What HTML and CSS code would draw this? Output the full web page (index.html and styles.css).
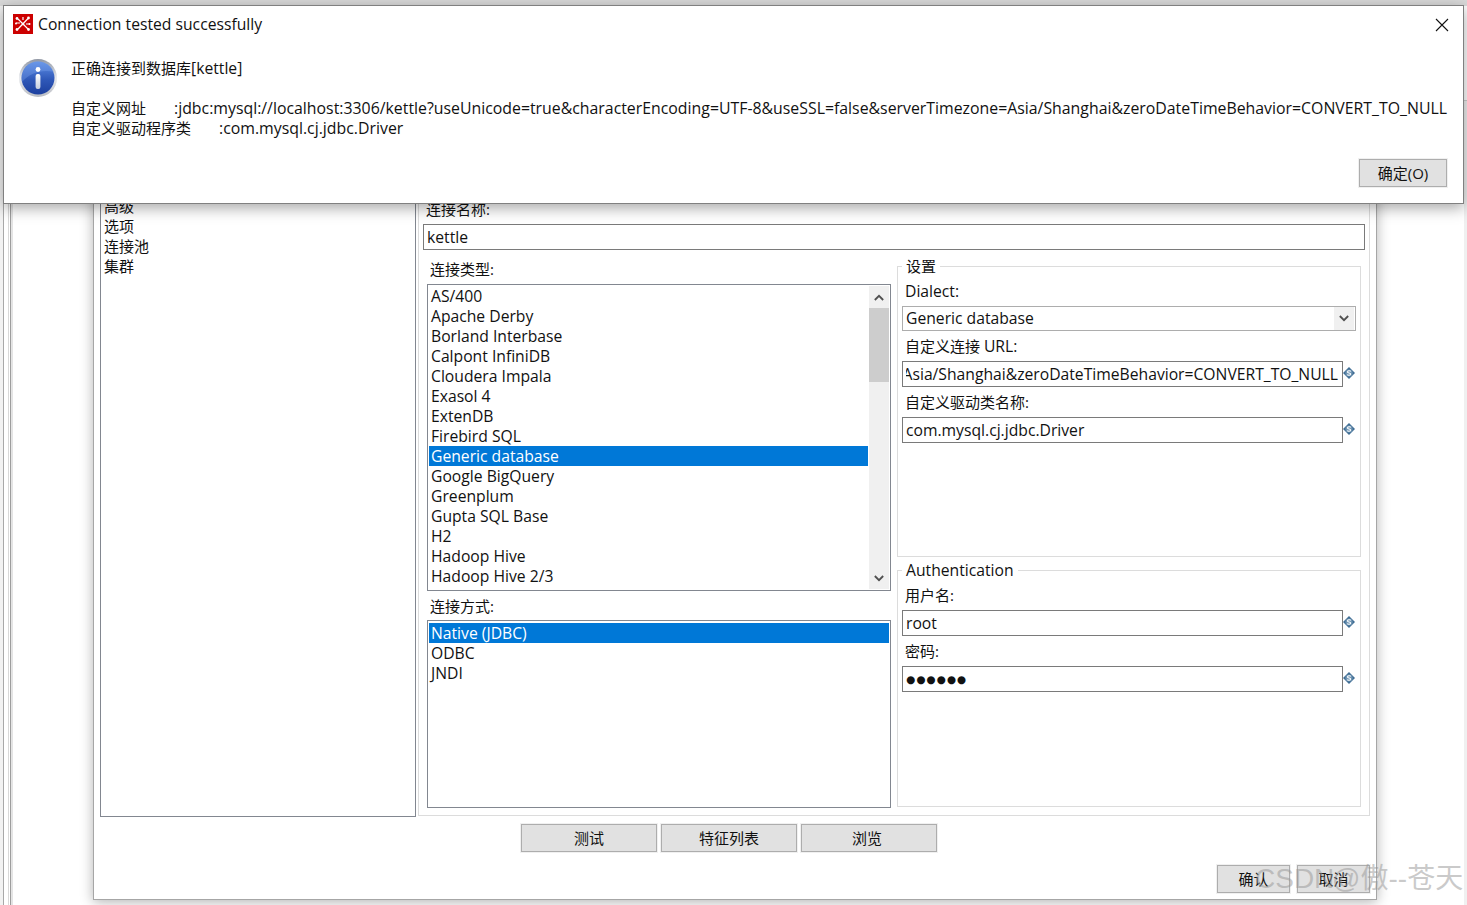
FILE: index.html
```html
<!DOCTYPE html>
<html lang="zh-CN">
<head>
<meta charset="utf-8">
<title>Connection tested successfully</title>
<link rel="stylesheet" href="styles.css">
</head>
<body>
<svg class="defs" width="0" height="0" aria-hidden="true">
  <defs>
    <symbol id="var" viewBox="0 0 12 12">
      <path d="M6 0 L12 6 L6 12 L0 6 Z" fill="#3f6d94"/>
      <circle cx="6" cy="6" r="3.6" fill="#6f94b2"/>
      <path d="M7.8 4.3 C7 3.5 4.5 3.5 4.5 5 C4.5 6.5 7.6 5.5 7.6 7 C7.6 8.5 5 8.5 4.2 7.7" fill="none" stroke="#fff" stroke-width="1.1"/>
    </symbol>
    <symbol id="up" viewBox="0 0 12 8"><path d="M1 7 L6 2 L11 7" fill="none" stroke="#505050" stroke-width="2.2"/></symbol>
    <symbol id="down" viewBox="0 0 12 8"><path d="M1 1 L6 6 L11 1" fill="none" stroke="#505050" stroke-width="2.2"/></symbol>
  </defs>
</svg>

<div class="desk">
  <div class="rail rail-left"></div>
  <div class="rail rail-right"></div>
  <div class="top-strip"></div>

  <main class="win">
    <div class="win-main">
      <ul class="tree">
        <li>一般</li><li>高级</li><li>选项</li><li>连接池</li><li>集群</li>
      </ul>
      <section class="panel">
        <div class="name-label">连接名称:</div>
        <div class="field name-field">kettle</div>
        <div class="cols">
          <div class="col-left">
            <div class="col-label">连接类型:</div>
            <div class="list list-type">
              <ul class="items">
                <li>AS/400</li><li>Apache Derby</li><li>Borland Interbase</li><li>Calpont InfiniDB</li><li>Cloudera Impala</li><li>Exasol 4</li><li>ExtenDB</li><li>Firebird SQL</li><li class="sel">Generic database</li><li>Google BigQuery</li><li>Greenplum</li><li>Gupta SQL Base</li><li>H2</li><li>Hadoop Hive</li><li>Hadoop Hive 2/3</li>
              </ul>
              <div class="sbar">
                <div class="sarrow"><svg width="10" height="7"><use href="#up"/></svg></div>
                <div class="thumb"></div>
                <div class="strack"></div>
                <div class="sarrow"><svg width="10" height="7"><use href="#down"/></svg></div>
              </div>
            </div>
            <div class="col-label col-label-2">连接方式:</div>
            <ul class="list list-method">
              <li class="sel">Native (JDBC)</li><li>ODBC</li><li>JNDI</li>
            </ul>
          </div>
          <div class="col-right">
            <fieldset class="group group-settings">
              <legend>设置</legend>
              <div class="lab lat">Dialect:</div>
              <div class="select"><span class="select-text">Generic database</span><span class="select-btn"><svg width="10" height="7"><use href="#down"/></svg></span></div>
              <div class="lab">自定义连接 <span class="lat">URL:</span></div>
              <div class="row">
                <div class="field field-url"><div class="clip"><span>jdbc:mysql://localhost:3306/kettle?useUnicode=true&amp;characterEncoding=UTF-8&amp;useSSL=false&amp;serverTimezone=Asia/Shanghai&amp;zeroDateTimeBehavior=CONVERT_TO_NULL</span></div></div>
                <svg class="var" width="12" height="12"><use href="#var"/></svg>
              </div>
              <div class="lab">自定义驱动类名称:</div>
              <div class="row">
                <div class="field">com.mysql.cj.jdbc.Driver</div>
                <svg class="var" width="12" height="12"><use href="#var"/></svg>
              </div>
            </fieldset>
            <fieldset class="group group-auth">
              <legend class="lat">Authentication</legend>
              <div class="lab">用户名:</div>
              <div class="row">
                <div class="field">root</div>
                <svg class="var" width="12" height="12"><use href="#var"/></svg>
              </div>
              <div class="lab">密码:</div>
              <div class="row">
                <div class="field field-pass">●●●●●●</div>
                <svg class="var" width="12" height="12"><use href="#var"/></svg>
              </div>
            </fieldset>
          </div>
        </div>
      </section>
    </div>
    <div class="actions">
      <button class="btn btn-wide">测试</button>
      <button class="btn btn-wide">特征列表</button>
      <button class="btn btn-wide btn-browse">浏览</button>
    </div>
    <div class="confirm">
      <button class="btn btn-small">确认</button>
      <button class="btn btn-small">取消</button>
    </div>
  </main>

  <section class="dialog">
    <header class="dlg-title">
      <svg class="app-icon" width="20" height="20" viewBox="0 0 20 20">
        <rect width="20" height="20" fill="#cc0000"/>
        <g stroke="#fff" stroke-width="1.2" fill="none">
          <path d="M5 5 L15 15 M15 4.5 L5 15 M3 9 H7 M13 10 H17 M10 3 V6"/>
        </g>
        <g fill="#fff">
          <circle cx="4" cy="4.5" r="1.4"/><circle cx="15.5" cy="4" r="1.4"/><circle cx="4" cy="15.5" r="1.4"/><circle cx="15.5" cy="15.5" r="1.4"/><circle cx="10" cy="10" r="1.3"/><circle cx="16.5" cy="10" r="1"/><circle cx="3" cy="9.5" r="1"/>
        </g>
      </svg>
      <span class="dlg-caption lat">Connection tested successfully</span>
      <svg class="close" width="14" height="14" viewBox="0 0 14 14"><path d="M1 1 L13 13 M13 1 L1 13" stroke="#111" stroke-width="1.1" fill="none"/></svg>
    </header>
    <div class="dlg-body">
      <svg class="info" width="40" height="40" viewBox="0 0 40 40">
        <defs>
          <linearGradient id="ring" x1="0" y1="0" x2="0" y2="1"><stop offset="0" stop-color="#8f96a3"/><stop offset="0.5" stop-color="#e8eaee"/><stop offset="1" stop-color="#b9bcc2"/></linearGradient>
          <linearGradient id="ball" x1="0" y1="0" x2="0" y2="1"><stop offset="0" stop-color="#5f8fe6"/><stop offset="0.55" stop-color="#2f58b8"/><stop offset="1" stop-color="#1c3f9e"/></linearGradient>
          <linearGradient id="bar" x1="0" y1="0" x2="0" y2="1"><stop offset="0" stop-color="#fff"/><stop offset="1" stop-color="#c6cfdf"/></linearGradient>
        </defs>
        <circle cx="20" cy="20" r="19" fill="url(#ring)"/>
        <circle cx="20" cy="20" r="16.5" fill="url(#ball)"/>
        <path d="M4 24 C12 14 26 11 36 14 C33 7 27 3.5 20 3.5 C11 3.5 4 11 3.5 20 Z" fill="#7fa6ee" opacity=".35"/>
        <circle cx="20" cy="11.5" r="2.4" fill="#fff"/>
        <rect x="17.6" y="16" width="4.8" height="15" rx="2" fill="url(#bar)"/>
      </svg>
      <div class="dlg-text">
        <div class="dlg-msg">正确连接到数据库<span class="lat">[kettle]</span></div>
        <div class="dlg-line"><span class="k1">自定义网址</span><span class="dlg-url">:jdbc:mysql://localhost:3306/kettle?useUnicode=true&amp;characterEncoding=UTF-8&amp;useSSL=false&amp;serverTimezone=Asia/Shanghai&amp;zeroDateTimeBehavior=CONVERT_TO_NULL</span></div>
        <div class="dlg-line"><span class="k2">自定义驱动程序类</span><span class="dlg-url">:com.mysql.cj.jdbc.Driver</span></div>
      </div>
    </div>
    <footer class="dlg-foot"><button class="btn btn-ok">确定(O)</button></footer>
  </section>

  <div class="watermark">CSDN @傲--苍天</div>
</div>
</body>
</html>
```

FILE: styles.css
```css
* { box-sizing: border-box; }
html, body { margin: 0; padding: 0; }
body {
  width: 1467px;
  height: 905px;
  overflow: hidden;
  background: #fff;
  color: #111;
  font-family: "Open Sans", "Noto Sans CJK SC", sans-serif;
  font-size: 15px;
  line-height: 20px;
}
ul { list-style: none; margin: 0; padding: 0; }
.defs { position: absolute; }
.lat { font-size: 15.7px; }

.desk { position: relative; width: 1467px; height: 905px; overflow: hidden; }

/* the windows behind the dialogs */
.top-strip { position: absolute; left: 0; top: 0; width: 1467px; height: 6px; background: #d9d9d9; }
.rail-left {
  position: absolute; left: 0; top: 0; width: 13px; height: 905px;
  background: linear-gradient(90deg, #f2f2f2 0 3px, #a8a8a8 3px 4px, #fff 4px 8px, #d8d8d8 8px 9px, #fff 9px 10px, #9d9d9d 10px 11px, #e4e4e4 11px 13px);
}
.rail-right {
  position: absolute; right: 0; top: 100px; width: 3px; height: 805px;
  background: #f0f0f0; border-top: 1px solid #cfcfcf;
}

/* connection window */
.win {
  position: absolute; left: 93px; top: 170px; width: 1284px; height: 730px;
  background: #fff;
  border: 1px solid #a6a6a6;
  box-shadow: 0 2px 12px rgba(0, 0, 0, .3);
  padding: 5px 6px 0 6px;
}
.win-main { display: flex; gap: 2px; height: 641px; align-items: flex-start; }
.tree {
  width: 316px; height: 641px; flex: none;
  border: 1px solid #828790;
  padding: 0 3px;
}
.tree li { height: 20px; line-height: 18px; }
.panel {
  width: 952px; height: 640px; flex: none;
  border: 1px solid #dcdcdc;
  padding: 23px 4px 0;
}
.name-label { margin-left: 3px; margin-bottom: 4px; height: 20px; line-height: 18px; }
.field {
  height: 26px; flex: 1; min-width: 0;
  border: 1px solid #7a7a7a;
  padding: 0 3px;
  font-size: 15.7px;
  line-height: 24px;
  background: #fff;
  white-space: nowrap;
  overflow: hidden;
}
.name-field { width: 942px; }
.cols { display: flex; gap: 6px; margin: 7px 0 0 4px; }
.col-left { width: 464px; padding-top: 3px; }
.col-right { width: 464px; display: flex; flex-direction: column; gap: 4px; }
.col-label { margin-left: 3px; height: 20px; line-height: 18px; margin-bottom: 4px; }
.col-label-2 { margin-top: 6px; margin-bottom: 3px; }
.list { border: 1px solid #828790; background: #fff; }
.list-type { height: 307px; padding: 1px; display: flex; overflow: hidden; }
.items { width: 440px; flex: none; padding-right: 1px; }
.list li, .items li { height: 20px; line-height: 20px; font-size: 15.7px; padding-left: 2px; white-space: nowrap; }
.sel { background: #0078d7; color: #fff; }
.list-method { height: 188px; padding: 2px 1px; }
.sbar { width: 20px; flex: none; background: #f0f0f0; display: flex; flex-direction: column; }
.sarrow { height: 22px; flex: none; display: flex; align-items: center; justify-content: center; }
.thumb { height: 74px; flex: none; background: #cdcdcd; }
.strack { flex: 1; }

.group {
  margin: 0; min-width: 0;
  border: 1px solid #dcdcdc;
  padding: 6px 4px 0;
}
.group legend { padding: 0 4px; height: 19px; line-height: 18px; }
.group-settings { height: 300px; }
.group-auth { height: 246px; }
.lab { height: 20px; line-height: 18px; margin-bottom: 4px; margin-left: 3px; }
.select {
  height: 25px; width: 454px; margin-bottom: 6px;
  border: 1px solid #adadad;
  display: flex; align-items: stretch;
  padding: 0 1px 0 3px;
}
.select-text { flex: 1; font-size: 15.7px; line-height: 23px; }
.select-btn { width: 20px; background: #f0f0f0; display: flex; align-items: center; justify-content: center; }
.row { display: flex; align-items: center; width: 453px; margin-bottom: 6px; }
.var { flex: none; margin: -2px 0 0 0; }
.clip { display: flex; justify-content: flex-end; overflow: hidden; width: 100%; padding-right: 1px; }
.clip span { flex: none; }
.field-pass { font-size: 10.5px; letter-spacing: 1px; font-family: "DejaVu Sans", sans-serif; }

.btn {
  font: inherit; color: #111;
  background: #e1e1e1;
  border: 1px solid #adadad;
  box-shadow: 0 0 0 1px #f0f0f0;
  padding: 0; margin: 0;
}
.actions { display: flex; gap: 4px; margin: 7px 0 0 421px; }
.btn-wide { width: 136px; height: 28px; }
.btn-browse { padding-right: 4px; }
.confirm { display: flex; justify-content: flex-end; gap: 7px; margin-top: 13px; padding-right: 0; }
.btn-small { width: 73px; height: 28px; }

/* message dialog */
.dialog {
  position: absolute; left: 3px; top: 5px; width: 1461px; height: 199px;
  background: #fff;
  border: 1px solid #808080;
  box-shadow: 0 4px 14px rgba(0, 0, 0, .35);
  display: flex; flex-direction: column;
}
.dlg-title { display: flex; align-items: center; height: 37px; padding: 0 14px 0 9px; flex: none; }
.app-icon { flex: none; margin-top: -2px; }
.dlg-caption { margin-left: 5px; flex: 1; margin-top: -1px; }
.dlg-body { display: flex; padding: 15px 0 0 14px; flex: 1; }
.info { flex: none; }
.dlg-text { margin-left: 13px; }
.dlg-msg { margin-bottom: 20px; }
.dlg-line { display: flex; white-space: nowrap; }
.dlg-url { font-size: 15.85px; }
.k1 { width: 103px; }
.k2 { width: 148px; }
.dlg-foot { display: flex; justify-content: flex-end; padding: 0 16px 16px 0; flex: none; }
.btn-ok { width: 88px; height: 28px; }

.watermark {
  position: absolute; left: 1255px; top: 861px;
  font-family: "Liberation Sans", "Noto Sans CJK SC", sans-serif;
  font-size: 28px; line-height: 36px;
  word-spacing: -10px;
  color: rgba(150, 150, 150, .5);
  white-space: nowrap;
}
```
